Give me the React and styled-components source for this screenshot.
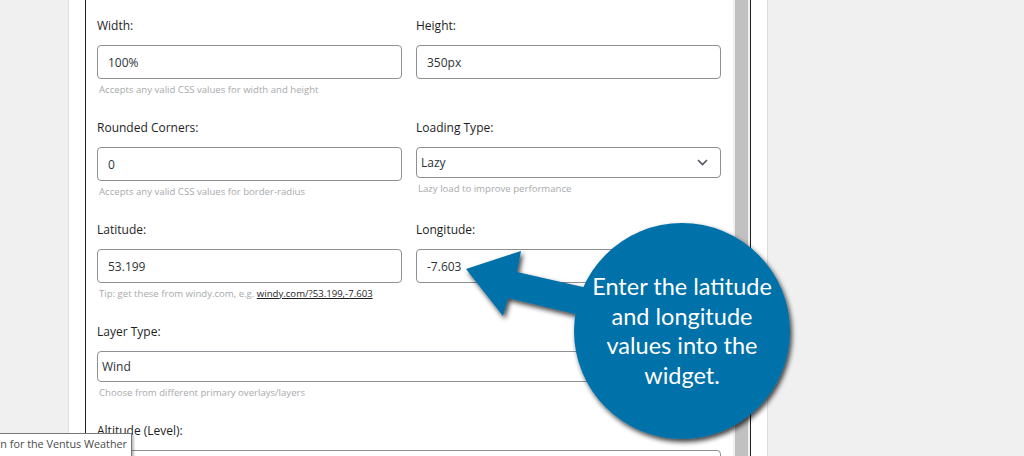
import React from "react"
import styled, { createGlobalStyle } from "styled-components"

const GlobalStyle = createGlobalStyle`
  html, body {
    margin: 0;
    padding: 0;
    background: #f0f0f0;
    font-family: "Open Sans", "Liberation Sans", sans-serif;
  }
`

const Page = styled.div`
  position: relative;
  display: flex;
  width: 1024px;
  height: 456px;
  overflow: hidden;
  background: #f0f0f0;
`

const Gutter = styled.div`
  width: 68px;
  flex-shrink: 0;
`

const Panel = styled.div`
  width: 700px;
  flex-shrink: 0;
  background: #ffffff;
  border-left: 1px solid #e2e2e2;
  border-right: 1px solid #dcdcdc;
  padding: 0 16px;
  box-sizing: border-box;
`

const Frame = styled.div`
  display: flex;
  height: 100%;
  border-left: 1px solid #1e1e1e;
  border-right: 1px solid #1e1e1e;
`

const Content = styled.div`
  flex: 1;
  padding: 17px 12px 0 11px;
  display: grid;
  grid-template-columns: 305px 305px;
  column-gap: 14px;
  row-gap: 22px;
  align-content: start;
  align-items: start;
`

const Scrollbar = styled.div`
  width: 17px;
  flex-shrink: 0;
  background: #f1f1f1;
  display: flex;
  justify-content: center;
  &::after {
    content: "";
    width: 13px;
    height: 100%;
    background: #c1c1c1;
  }
`

const Field = styled.div`
  display: flex;
  flex-direction: column;
  grid-column: ${(p) => (p.$wide ? "1 / span 2" : "auto")};
`

const Label = styled.label`
  font-size: 12px;
  line-height: 18px;
  color: #1e1e1e;
  margin-bottom: 10px;
`

const TextInput = styled.div`
  height: 34px;
  box-sizing: border-box;
  border: 1px solid #8c8f94;
  border-radius: 4px;
  padding: 0 10px;
  display: flex;
  align-items: center;
  font-size: 12px;
  color: #2c3338;
`

const Select = styled.div`
  height: 31px;
  box-sizing: border-box;
  border: 1px solid #8c8f94;
  border-radius: 4px;
  padding: 0 4px;
  display: flex;
  align-items: center;
  justify-content: space-between;
  font-size: 12px;
  color: #2c3338;
  svg {
    margin-left: auto;
    margin-right: 8px;
  }
`

const Help = styled.div`
  margin-top: 4px;
  font-size: 9.6px;
  line-height: 14px;
  color: #a7aaad;
  padding-left: 2px;
  a {
    color: #1e1e1e;
    text-decoration: underline;
  }
`

const Tooltip = styled.div`
  position: absolute;
  left: 0;
  top: 433px;
  width: 132px;
  height: 23px;
  box-sizing: border-box;
  background: #ffffff;
  border: 1px solid #767676;
  border-left: none;
  border-bottom: none;
  box-shadow: 2px 2px 2px rgba(0, 0, 0, 0.25);
  font-size: 10.8px;
  line-height: 18px;
  color: #4a4a4a;
  padding: 1px 4px 0 0;
  text-align: right;
  white-space: nowrap;
`

const Callout = styled.div`
  position: absolute;
  left: 440px;
  top: 210px;
  width: 370px;
  height: 246px;
  pointer-events: none;
  svg {
    position: absolute;
    left: 0;
    top: 0;
  }
`

const CalloutText = styled.div`
  position: absolute;
  left: 134px;
  top: 13px;
  width: 216px;
  height: 216px;
  display: flex;
  align-items: center;
  justify-content: center;
  text-align: center;
  font-family: Lato, "Open Sans", sans-serif;
  font-size: 23.5px;
  line-height: 29.5px;
  color: #ffffff;
`

const Chevron = () => (
  <svg width="11" height="7" viewBox="0 0 11 7">
    <path d="M1 1l4.5 4.5L10 1" fill="none" stroke="#50575e" strokeWidth="1.6" />
  </svg>
)

const App = () => {
  return (
    <Page>
      <GlobalStyle />
      <Gutter />
      <Panel>
        <Frame>
          <Content>
            <Field>
              <Label>Width:</Label>
              <TextInput>100%</TextInput>
              <Help>Accepts any valid CSS values for width and height</Help>
            </Field>
            <Field>
              <Label>Height:</Label>
              <TextInput>350px</TextInput>
            </Field>
            <Field>
              <Label>Rounded Corners:</Label>
              <TextInput>0</TextInput>
              <Help>Accepts any valid CSS values for border-radius</Help>
            </Field>
            <Field>
              <Label>Loading Type:</Label>
              <Select>
                Lazy
                <Chevron />
              </Select>
              <Help>Lazy load to improve performance</Help>
            </Field>
            <Field>
              <Label>Latitude:</Label>
              <TextInput>53.199</TextInput>
              <Help>
                Tip: get these from windy.com, e.g. <a>windy.com/?53.199,-7.603</a>
              </Help>
            </Field>
            <Field>
              <Label>Longitude:</Label>
              <TextInput>-7.603</TextInput>
            </Field>
            <Field $wide>
              <Label>Layer Type:</Label>
              <Select>
                Wind
                <Chevron />
              </Select>
              <Help>Choose from different primary overlays/layers</Help>
            </Field>
            <Field $wide>
              <Label>Altitude (Level):</Label>
              <Select>
                <Chevron />
              </Select>
            </Field>
          </Content>
          <Scrollbar />
        </Frame>
      </Panel>
      <Tooltip>n for the Ventus Weather</Tooltip>
      <Callout>
        <svg width="370" height="246" viewBox="0 0 370 246">
          <defs>
            <filter id="shade" x="-20%" y="-20%" width="140%" height="140%">
              <feDropShadow dx="2" dy="3" stdDeviation="2.5" floodColor="#000" floodOpacity="0.75" />
            </filter>
          </defs>
          <g filter="url(#shade)" fill="#0071a9">
            <polygon points="26,59 81,41 77,62 165,82 160,110 68,88 63,106" />
            <circle cx="242" cy="121" r="108" />
          </g>
        </svg>
        <CalloutText>
          Enter the latitude
          <br />
          and longitude
          <br />
          values into the
          <br />
          widget.
        </CalloutText>
      </Callout>
    </Page>
  )
}

export default App
